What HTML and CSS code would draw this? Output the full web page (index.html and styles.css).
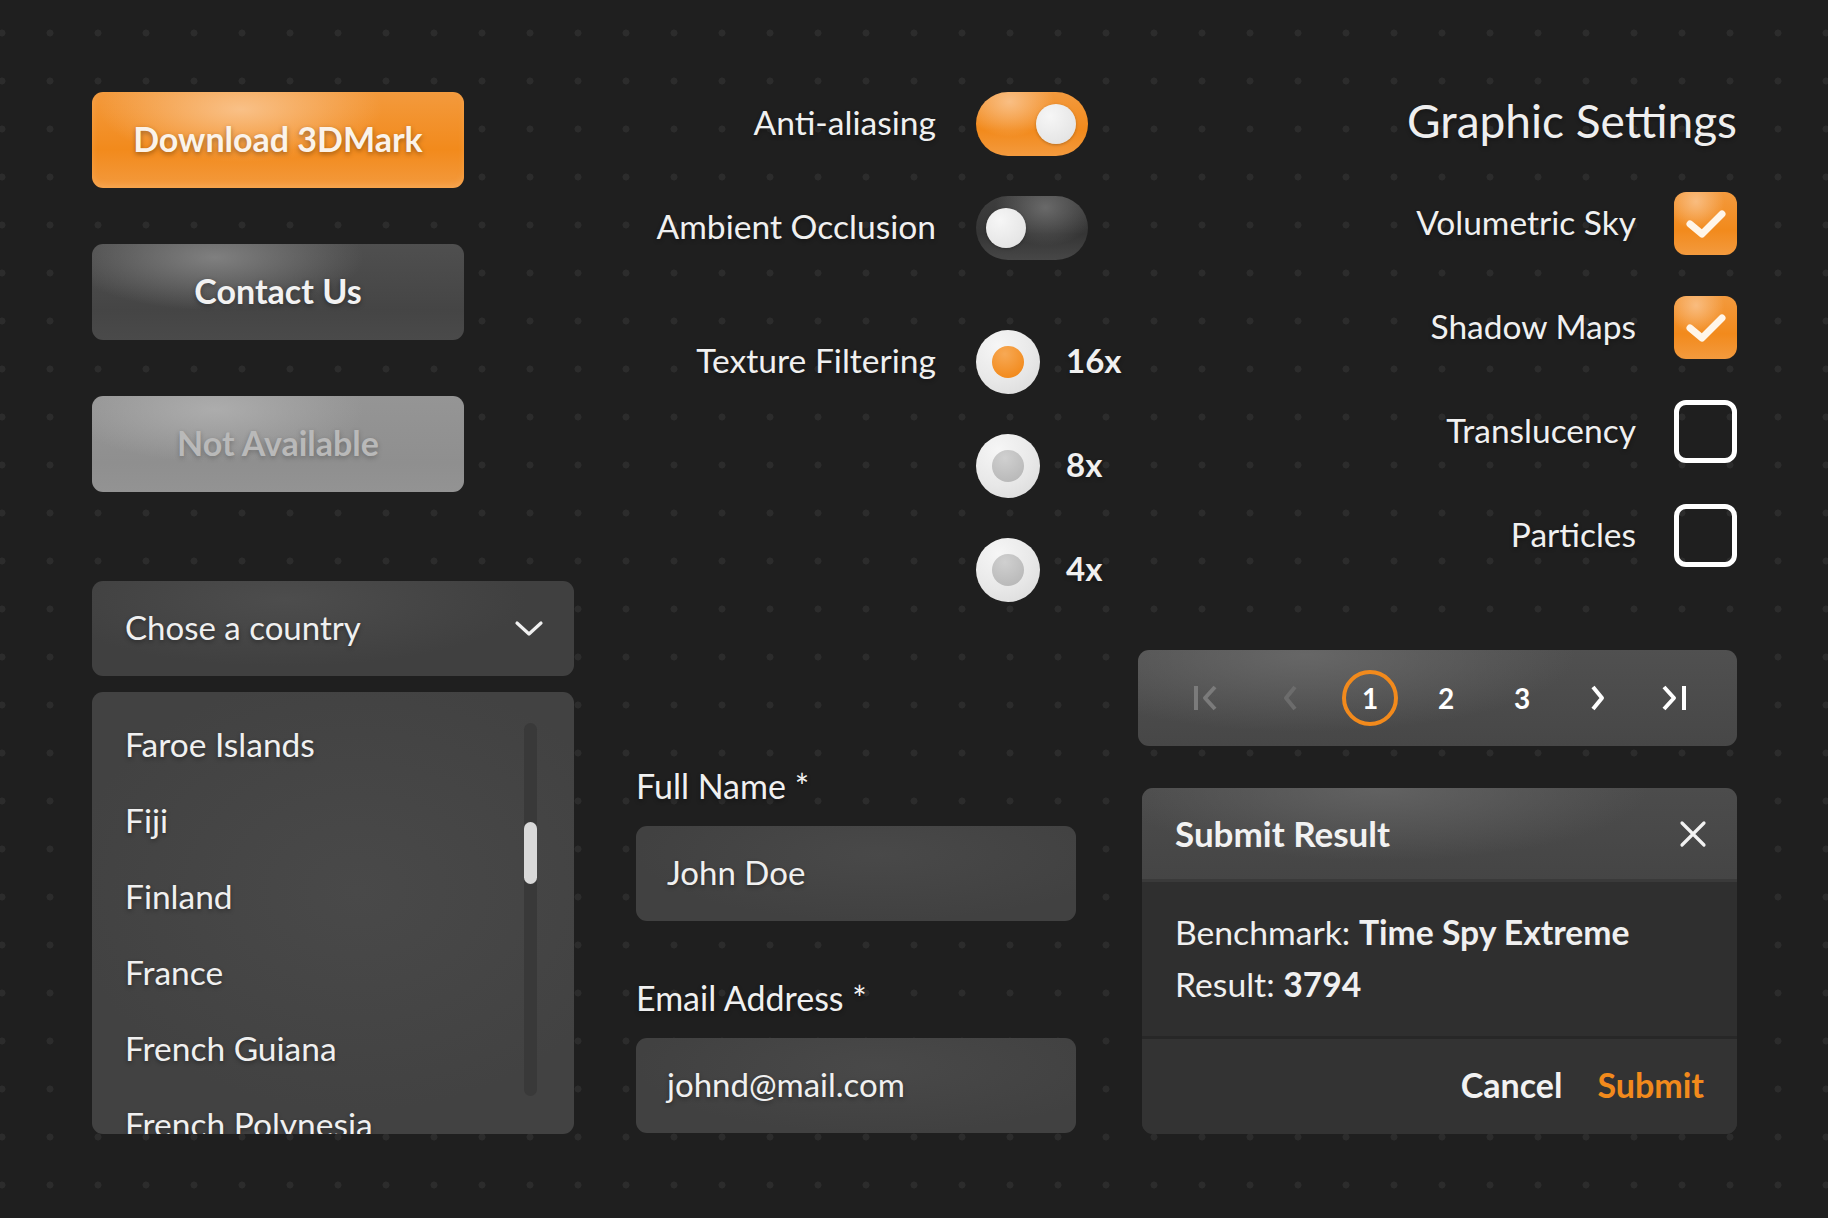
FILE: index.html
```html
<!DOCTYPE html>
<html lang="en">
<head>
<meta charset="utf-8">
<title>3DMark UI Kit</title>
<link rel="stylesheet" href="styles.css">
</head>
<body>
<main class="board">
  <section class="col col-left">
    <button class="btn btn-primary">Download 3DMark</button>
    <button class="btn btn-secondary">Contact Us</button>
    <button class="btn btn-disabled" disabled>Not Available</button>

    <div class="select">
      <span class="select-value">Chose a country</span>
      <svg class="select-chevron" width="30" height="18" viewBox="0 0 30 18"><path d="M3 3 L15 14 L27 3" fill="none" stroke="#f0f0f0" stroke-width="3.2" stroke-linecap="round" stroke-linejoin="round"/></svg>
    </div>

    <div class="listbox">
      <ul class="options">
        <li>Faroe Islands</li>
        <li>Fiji</li>
        <li>Finland</li>
        <li>France</li>
        <li>French Guiana</li>
        <li>French Polynesia</li>
      </ul>
      <div class="scroll-track"><div class="scroll-thumb"></div></div>
    </div>
  </section>

  <section class="col col-mid">
    <div class="setting">
      <span class="setting-label">Anti-aliasing</span>
      <span class="toggle toggle-on"><span class="knob"></span></span>
    </div>
    <div class="setting">
      <span class="setting-label">Ambient Occlusion</span>
      <span class="toggle toggle-off"><span class="knob"></span></span>
    </div>
    <div class="setting setting-spaced">
      <span class="setting-label">Texture Filtering</span>
      <span class="radio radio-on"><span class="radio-dot"></span></span>
      <span class="radio-value">16x</span>
    </div>
    <div class="setting">
      <span class="setting-label"></span>
      <span class="radio"><span class="radio-dot"></span></span>
      <span class="radio-value">8x</span>
    </div>
    <div class="setting">
      <span class="setting-label"></span>
      <span class="radio"><span class="radio-dot"></span></span>
      <span class="radio-value">4x</span>
    </div>

    <form class="form">
      <label class="field-label">Full Name *</label>
      <div class="field">John Doe</div>
      <label class="field-label field-label-next">Email Address *</label>
      <div class="field">johnd@mail.com</div>
    </form>
  </section>

  <section class="col col-right">
    <h1 class="title">Graphic Settings</h1>
    <div class="checks">
      <div class="check-row">
        <span class="check-label">Volumetric Sky</span>
        <span class="checkbox checked"><svg width="63" height="63" viewBox="0 0 63 63"><path d="M16 32 L28 42 L48 22" fill="none" stroke="#fff6ea" stroke-width="7" stroke-linecap="round" stroke-linejoin="round"/></svg></span>
      </div>
      <div class="check-row">
        <span class="check-label">Shadow Maps</span>
        <span class="checkbox checked"><svg width="63" height="63" viewBox="0 0 63 63"><path d="M16 32 L28 42 L48 22" fill="none" stroke="#fff6ea" stroke-width="7" stroke-linecap="round" stroke-linejoin="round"/></svg></span>
      </div>
      <div class="check-row">
        <span class="check-label">Translucency</span>
        <span class="checkbox"></span>
      </div>
      <div class="check-row">
        <span class="check-label">Particles</span>
        <span class="checkbox"></span>
      </div>
    </div>

    <nav class="pager">
      <span class="pg pg-first"><svg width="30" height="30" viewBox="0 0 30 30"><path d="M5 3 V27" stroke="#7b7b7b" stroke-width="4"/><path d="M24 4 L14 15 L24 26" fill="none" stroke="#7b7b7b" stroke-width="4" stroke-linejoin="round"/></svg></span>
      <span class="pg pg-prev"><svg width="30" height="30" viewBox="0 0 30 30"><path d="M20 4 L11 15 L20 26" fill="none" stroke="#6c6c6c" stroke-width="4" stroke-linejoin="round"/></svg></span>
      <span class="pg pg-num pg-current">1</span>
      <span class="pg pg-num">2</span>
      <span class="pg pg-num">3</span>
      <span class="pg"><svg width="30" height="30" viewBox="0 0 30 30"><path d="M10 4 L19 15 L10 26" fill="none" stroke="#ffffff" stroke-width="4" stroke-linejoin="round"/></svg></span>
      <span class="pg"><svg width="30" height="30" viewBox="0 0 30 30"><path d="M5 4 L15 15 L5 26" fill="none" stroke="#ffffff" stroke-width="4" stroke-linejoin="round"/><path d="M25 3 V27" stroke="#ffffff" stroke-width="4"/></svg></span>
    </nav>

    <div class="dialog">
      <div class="dialog-head">
        <span class="dialog-title">Submit Result</span>
        <svg class="dialog-close" width="28" height="28" viewBox="0 0 28 28"><path d="M3 3 L25 25 M25 3 L3 25" stroke="#f2f2f2" stroke-width="3.2" stroke-linecap="round"/></svg>
      </div>
      <div class="dialog-body">
        <p>Benchmark: <b>Time Spy Extreme</b></p>
        <p>Result: <b>3794</b></p>
      </div>
      <div class="dialog-foot">
        <span class="action action-cancel">Cancel</span>
        <span class="action action-submit">Submit</span>
      </div>
    </div>
  </section>
</main>
</body>
</html>
```

FILE: styles.css
```css
* { box-sizing: border-box; }

html, body {
  margin: 0;
  padding: 0;
}

body {
  width: 1828px;
  height: 1218px;
  overflow: hidden;
  background-color: #1f1f1f;
  background-image: radial-gradient(circle, #2c2c2c 0, #2c2c2c 3.2px, transparent 3.8px);
  background-size: 48px 48px;
  background-position: 26px 9px;
  font-family: "Lato", "Liberation Sans", sans-serif;
  color: #f0f0f0;
}

.board {
  display: grid;
  grid-template-columns: 482px 440px 599px;
  column-gap: 62px;
  padding: 92px 91px 0 92px;
  align-items: start;
}

.col {
  display: flex;
  flex-direction: column;
  min-width: 0;
}

/* ---------- buttons ---------- */
.btn {
  width: 372px;
  height: 96px;
  border: 0;
  border-radius: 11px;
  font-family: "Lato", sans-serif;
  font-weight: 700;
  font-size: 34px;
  color: #fbf3ea;
  text-shadow: 0 2px 5px rgba(0, 0, 0, 0.35);
  padding: 0 0 4px 0;
  cursor: pointer;
}
.btn + .btn { margin-top: 56px; }

.btn-primary {
  background:
    radial-gradient(ellipse 38% 55% at 40% 18%, rgba(250, 200, 150, 0.85), rgba(250, 200, 150, 0) 100%),
    linear-gradient(180deg, #f39a3d 0%, #f28a1c 60%, #f39a3e 100%);
  box-shadow: inset 0 -3px 6px rgba(255, 190, 120, 0.35);
}
.btn-secondary {
  color: #f2f2f2;
  background:
    radial-gradient(ellipse 40% 55% at 33% 14%, rgba(130, 130, 130, 0.95), rgba(130, 130, 130, 0) 100%),
    linear-gradient(180deg, #4f4f4f 0%, #454545 70%, #4a4a4a 100%);
}
.btn-disabled {
  color: #b9b9b9;
  text-shadow: 0 2px 5px rgba(0, 0, 0, 0.25);
  background:
    radial-gradient(ellipse 40% 55% at 33% 14%, rgba(175, 175, 175, 0.9), rgba(175, 175, 175, 0) 100%),
    linear-gradient(180deg, #959595 0%, #8f8f8f 70%, #939393 100%);
}

/* ---------- select ---------- */
.select {
  margin-top: 89px;
  height: 95px;
  border-radius: 11px;
  display: flex;
  align-items: center;
  justify-content: space-between;
  padding: 0 30px 3px 33px;
  background:
    radial-gradient(ellipse 50% 70% at 40% 20%, rgba(80, 80, 80, 0.8), rgba(80, 80, 80, 0) 100%),
    #404040;
  font-size: 33px;
  text-shadow: 0 2px 4px rgba(0, 0, 0, 0.35);
}
.select-chevron { display: block; flex: none; margin-top: 3px; }

/* ---------- listbox ---------- */
.listbox {
  position: relative;
  margin-top: 16px;
  height: 442px;
  border-radius: 11px;
  overflow: hidden;
  background:
    radial-gradient(ellipse 60% 50% at 55% 45%, rgba(76, 76, 76, 0.7), rgba(76, 76, 76, 0) 100%),
    #424242;
}
.options {
  list-style: none;
  margin: 0;
  padding: 14px 0 0 33px;
  font-size: 33.5px;
  text-shadow: 0 2px 4px rgba(0, 0, 0, 0.35);
}
.options li {
  height: 76px;
  line-height: 76px;
  white-space: nowrap;
}
.scroll-track {
  position: absolute;
  top: 31px;
  bottom: 38px;
  right: 37px;
  width: 13px;
  border-radius: 7px;
  background: #393939;
}
.scroll-thumb {
  margin-top: 99px;
  height: 62px;
  border-radius: 7px;
  background: #d9d9d9;
}

/* ---------- settings ---------- */
.setting {
  display: flex;
  align-items: center;
  height: 64px;
  margin-top: 40px;
}
.setting:first-child { margin-top: 0; }
.setting-spaced { margin-top: 70px; }

.setting-label {
  flex: none;
  width: 300px;
  margin-right: 40px;
  padding-bottom: 4px;
  text-align: right;
  font-size: 33.6px;
  white-space: nowrap;
  text-shadow: 0 2px 4px rgba(0, 0, 0, 0.3);
}

.toggle {
  flex: none;
  width: 112px;
  height: 64px;
  border-radius: 32px;
  display: flex;
  align-items: center;
  padding: 0 12px;
}
.toggle-on {
  justify-content: flex-end;
  background:
    radial-gradient(ellipse 40% 55% at 30% 15%, rgba(250, 195, 140, 0.9), rgba(250, 195, 140, 0) 100%),
    linear-gradient(180deg, #f39a3e 0%, #f28a1c 60%, #f39a3e 100%);
}
.toggle-off {
  justify-content: flex-start;
  padding-left: 10px;
  background:
    radial-gradient(ellipse 45% 60% at 62% 18%, rgba(110, 110, 110, 0.9), rgba(110, 110, 110, 0) 100%),
    linear-gradient(180deg, #3e3e3e 0%, #353535 60%, #474747 100%);
}
.knob {
  flex: none;
  width: 40px;
  height: 40px;
  border-radius: 50%;
  background: radial-gradient(circle at 35% 30%, #f6f6f6 0%, #e6e6e6 70%, #dcdcdc 100%);
  box-shadow: 0 1px 3px rgba(0, 0, 0, 0.25);
}

.radio {
  flex: none;
  width: 64px;
  height: 64px;
  border-radius: 50%;
  display: flex;
  align-items: center;
  justify-content: center;
  background: radial-gradient(circle at 35% 25%, #f6f6f6 0%, #e8e8e8 55%, #d8d8d8 100%);
}
.radio-dot {
  width: 32px;
  height: 32px;
  border-radius: 50%;
  background: radial-gradient(circle at 40% 25%, #d0d0d0 0%, #b9b9b9 80%);
}
.radio-on .radio-dot {
  background: radial-gradient(circle at 40% 25%, #f7a955 0%, #f28a1c 80%);
}
.radio-value {
  flex: none;
  margin-left: 26px;
  padding-bottom: 4px;
  font-size: 33px;
  font-weight: 700;
  white-space: nowrap;
  text-shadow: 0 2px 4px rgba(0, 0, 0, 0.3);
}

/* ---------- form ---------- */
.form {
  margin-top: 165px;
  display: flex;
  flex-direction: column;
}
.field-label {
  font-size: 34px;
  line-height: 38px;
  height: 40px;
  text-shadow: 0 2px 4px rgba(0, 0, 0, 0.35);
}
.field-label-next { margin-top: 58px; }
.field {
  margin-top: 19px;
  height: 95px;
  border-radius: 11px;
  display: flex;
  align-items: center;
  padding: 0 0 4px 31px;
  font-size: 33px;
  text-shadow: 0 2px 4px rgba(0, 0, 0, 0.35);
  background:
    radial-gradient(ellipse 55% 70% at 55% 30%, rgba(76, 76, 76, 0.7), rgba(76, 76, 76, 0) 100%),
    #414141;
}

/* ---------- right column ---------- */
.title {
  margin: 0;
  height: 58px;
  line-height: 58px;
  text-align: right;
  font-size: 46px;
  font-weight: 400;
  color: #efefef;
  text-shadow: 0 2px 4px rgba(0, 0, 0, 0.3);
}

.checks {
  margin-top: 42px;
  display: flex;
  flex-direction: column;
  gap: 41px;
}
.check-row {
  display: flex;
  align-items: center;
  justify-content: flex-end;
  gap: 38px;
  height: 63px;
}
.check-label {
  padding-bottom: 3px;
  font-size: 33.5px;
  text-shadow: 0 2px 4px rgba(0, 0, 0, 0.3);
}
.checkbox {
  flex: none;
  width: 63px;
  height: 63px;
  border-radius: 12px;
  border: 5px solid #ffffff;
  display: block;
}
.checkbox.checked {
  border: 0;
  background:
    radial-gradient(ellipse 45% 45% at 35% 15%, rgba(250, 195, 140, 0.85), rgba(250, 195, 140, 0) 100%),
    linear-gradient(180deg, #f39a3e 0%, #f28a1c 60%, #f39a3e 100%);
}
.checkbox svg { display: block; }

/* ---------- pager ---------- */
.pager {
  margin-top: 83px;
  height: 96px;
  border-radius: 11px;
  display: flex;
  align-items: center;
  padding-left: 40px;
  gap: 20px;
  background:
    radial-gradient(ellipse 45% 80% at 28% 5%, rgba(105, 105, 105, 0.9), rgba(105, 105, 105, 0) 100%),
    linear-gradient(180deg, #505050 0%, #474747 100%);
}
.pg {
  flex: none;
  width: 56px;
  height: 56px;
  display: flex;
  align-items: center;
  justify-content: center;
}
.pg-first { margin-right: 8px; }
.pg-prev { margin-right: 4px; }
.pg svg { display: block; }
.pg-num {
  font-size: 28px;
  font-weight: 700;
  color: #ffffff;
}
.pg-current {
  border: 4px solid #f28a1c;
  border-radius: 50%;
}

/* ---------- dialog ---------- */
.dialog {
  margin-top: 42px;
  margin-left: 4px;
  height: 346px;
  border-radius: 11px;
  overflow: hidden;
  display: flex;
  flex-direction: column;
  background: #303030;
}
.dialog-head {
  height: 94px;
  flex: none;
  display: flex;
  align-items: center;
  justify-content: space-between;
  padding: 0 30px 0 33px;
  border-bottom: 3px solid #3a3a3a;
  background:
    radial-gradient(ellipse 45% 80% at 40% 0%, rgba(100, 100, 100, 0.9), rgba(100, 100, 100, 0) 100%),
    linear-gradient(180deg, #4c4c4c 0%, #454545 100%);
}
.dialog-title {
  padding-bottom: 2px;
  font-size: 35px;
  font-weight: 700;
  color: #f2f2f2;
}
.dialog-close { display: block; flex: none; }
.dialog-body {
  height: 154px;
  flex: none;
  padding: 24px 0 0 33px;
  background: #2f2f2f;
}
.dialog-body p {
  margin: 0;
  height: 52px;
  line-height: 52px;
  font-size: 33.7px;
  color: #f0f0f0;
}
.dialog-body b { font-weight: 700; }
.dialog-foot {
  flex: 1;
  display: flex;
  align-items: center;
  justify-content: flex-end;
  gap: 35px;
  padding: 0 33px 4px 0;
  border-top: 3px solid #272727;
  background: #333333;
}
.action {
  font-size: 34px;
  font-weight: 700;
}
.action-cancel { color: #f2f2f2; }
.action-submit { color: #f28a1c; }
```
